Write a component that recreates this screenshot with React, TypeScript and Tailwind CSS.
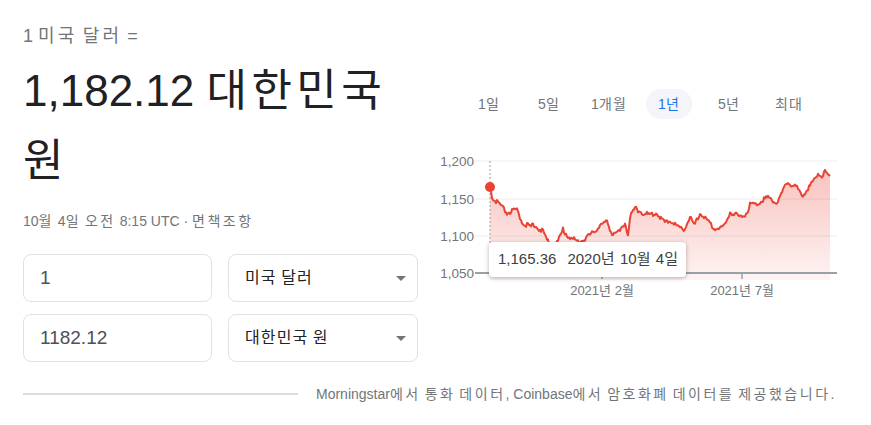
import React from "react";

// Points clés de la courbe (coordonnées locales du graphique)
const KEYS: [number, number][] = [
  [60, 37], [63, 50], [67, 52], [77, 63], [87, 60], [92, 72], [100, 77], [105, 75],
  [113, 82], [117, 90], [122, 95], [127, 93], [133, 80], [140, 88], [150, 92],
  [157, 87], [163, 83], [170, 75], [177, 72], [182, 83], [190, 82], [195, 72],
  [198, 85], [200, 67], [205, 58], [213, 63], [220, 65], [227, 63], [235, 73],
  [240, 70], [243, 73], [253, 80], [260, 68], [265, 75], [270, 63], [277, 70],
  [283, 78], [290, 78], [295, 75], [300, 62], [307, 65], [310, 67], [317, 63],
  [320, 53], [325, 55], [332, 50], [338, 47], [347, 53], [352, 43], [357, 32],
  [362, 35], [367, 38], [373, 45], [378, 38], [383, 33], [388, 22], [392, 27],
  [395, 22], [398, 25], [400, 26],
];

function buildLine() {
  const pts: [number, number][] = [];
  for (let i = 0; i < KEYS.length - 1; i++) {
    const [x0, y0] = KEYS[i];
    const [x1, y1] = KEYS[i + 1];
    for (let x = x0; x < x1; x += 1) {
      const t = (x - x0) / (x1 - x0);
      const noise = i === 0 && x < x0 + 2 ? 0 : ((Math.sin(x * 12.9898) * 43758.5453) % 1) * 2.6;
      pts.push([x, y0 + (y1 - y0) * t + noise]);
    }
  }
  pts.push(KEYS[KEYS.length - 1]);
  return pts;
}

const PTS = buildLine();
const LINE = PTS.map((p, i) => `${i ? "L" : "M"}${p[0]} ${p[1].toFixed(1)}`).join(" ");
const AREA = `${LINE} L400 130 L60 130 Z`;

const GRID = [
  { y: 11, label: "1,200" },
  { y: 49, label: "1,150" },
  { y: 86, label: "1,100" },
];

const TABS = ["1일", "5일", "1개월", "1년", "5년", "최대"];

// Le hangul du modèle est plus large : on espace les syllabes
function K({ text, cls }: { text: string; cls: string }) {
  return (
    <>
      {text.split(/([\uAC00-\uD7A3]+)/).map((part, i) =>
        /[\uAC00-\uD7A3]/.test(part) ? (
          <span key={i} className={cls}>
            {part}
          </span>
        ) : (
          part
        )
      )}
    </>
  );
}

function Select({ label }: { label: string }) {
  return (
    <div className="w-[190px] h-12 border border-[#dfe1e5] rounded-lg flex items-center justify-between pl-4 pr-[11px]">
      <span className="text-[16px] text-[#202124]">
        <K text={label} cls="tracking-[0.07em]" />
      </span>
      <span className="w-0 h-0 border-l-[5px] border-r-[5px] border-t-[5px] border-l-transparent border-r-transparent border-t-[#70757a]" />
    </div>
  );
}

function Input({ value }: { value: string }) {
  return (
    <div className="w-[189px] h-12 border border-[#dfe1e5] rounded-lg flex items-center pl-4 text-[19px] text-[#4d5156]">
      {value}
    </div>
  );
}

export default function App() {
  return (
    <div
      className="w-[871px] h-[425px] bg-white pl-[23px] pt-6 overflow-hidden"
      style={{ fontFamily: '"Liberation Sans", Arial, "Noto Sans CJK KR", sans-serif' }}
    >
      <div className="flex">
        {/* Colonne gauche */}
        <div className="w-[395px]">
          <div className="text-[18px] leading-6 text-[#70757a]">
            <K text="1 미국 달러 =" cls="tracking-[0.18em]" />
          </div>
          <div className="mt-2 text-[44px] leading-[70px] text-[#202124]">
            <K text="1,182.12 대한민국 원" cls="tracking-[0.1em]" />
          </div>
          <div className="mt-[15px] text-[14px] leading-5 text-[#70757a]">
            <K text="10월 4일 오전 8:15 UTC · 면책조항" cls="tracking-[0.18em]" />
          </div>
          <div className="mt-[23px] flex flex-col gap-3">
            <div className="flex gap-4">
              <Input value="1" />
              <Select label="미국 달러" />
            </div>
            <div className="flex gap-4">
              <Input value="1182.12" />
              <Select label="대한민국 원" />
            </div>
          </div>
        </div>

        {/* Colonne droite : graphique */}
        <div className="ml-3 flex-1">
          <div className="mt-[65px] flex pl-[29px]">
            {TABS.map((t) => (
              <div key={t} className="w-[60px] flex justify-center">
                <span
                  className={
                    t === "1년"
                      ? "h-[30px] px-3 rounded-full bg-[#f3f5f8] flex items-center text-[14px] text-[#1a73e8]"
                      : "h-[30px] px-3 flex items-center text-[14px] text-[#70757a]"
                  }
                >
                  <K text={t} cls="tracking-[0.08em]" />
                </span>
              </div>
            ))}
          </div>

          <div className="relative mt-[31px] w-[441px] h-[160px]">
            <svg width="441" height="160" viewBox="0 0 441 160">
              <defs>
                <linearGradient id="fill" x1="0" y1="20" x2="0" y2="130" gradientUnits="userSpaceOnUse">
                  <stop offset="0" stopColor="#ea4335" stopOpacity="0.32" />
                  <stop offset="1" stopColor="#ea4335" stopOpacity="0.06" />
                </linearGradient>
              </defs>
              {GRID.map((g) => (
                <g key={g.label}>
                  <line x1="45" x2="407" y1={g.y} y2={g.y} stroke="#ececec" strokeWidth="1" />
                  <text x="44" y={g.y + 5} textAnchor="end" fontSize="13.5" fill="#70757a">
                    {g.label}
                  </text>
                </g>
              ))}
              <text x="44" y="128" textAnchor="end" fontSize="13.5" fill="#70757a">
                1,050
              </text>
              <path d={AREA} fill="url(#fill)" />
              <line x1="60" x2="60" y1="11" y2="123" stroke="#9aa0a6" strokeWidth="1" strokeDasharray="2 2" />
              <line x1="45" x2="407" y1="123" y2="123" stroke="#9aa0a6" strokeWidth="2" />
              <line x1="172" x2="172" y1="123" y2="129" stroke="#9aa0a6" strokeWidth="1.5" />
              <line x1="312" x2="312" y1="123" y2="129" stroke="#9aa0a6" strokeWidth="1.5" />
              <text x="172" y="145" textAnchor="middle" fontSize="13" fill="#70757a">
                2021년 2월
              </text>
              <text x="312" y="145" textAnchor="middle" fontSize="13" fill="#70757a">
                2021년 7월
              </text>
              <path d={LINE} fill="none" stroke="#ea4335" strokeWidth="2" strokeLinejoin="round" />
              <circle cx="60" cy="37" r="5" fill="#ea4335" />
            </svg>

            {/* Info-bulle */}
            <div className="absolute left-[59px] top-[92px] w-[197px] h-[35px] bg-white rounded-sm shadow-[0_1px_4px_rgba(0,0,0,0.3)] flex items-center pl-[9px] text-[15px] text-[#3c4043]">
              <span>1,165.36</span>
              <span className="ml-[11px]">
                <K text="2020년 10월 4일" cls="tracking-[0.08em]" />
              </span>
            </div>
          </div>
        </div>
      </div>

      {/* Pied : source des données */}
      <div className="mt-[22px] flex items-center">
        <div className="w-[275px] h-[2px] bg-[#dadce0]" />
        <div className="ml-[18px] text-[14px] leading-5 text-[#70757a] whitespace-nowrap">
          <K text="Morningstar에서 통화 데이터, Coinbase에서 암호화폐 데이터를 제공했습니다." cls="tracking-[0.18em]" />
        </div>
      </div>
    </div>
  );
}
